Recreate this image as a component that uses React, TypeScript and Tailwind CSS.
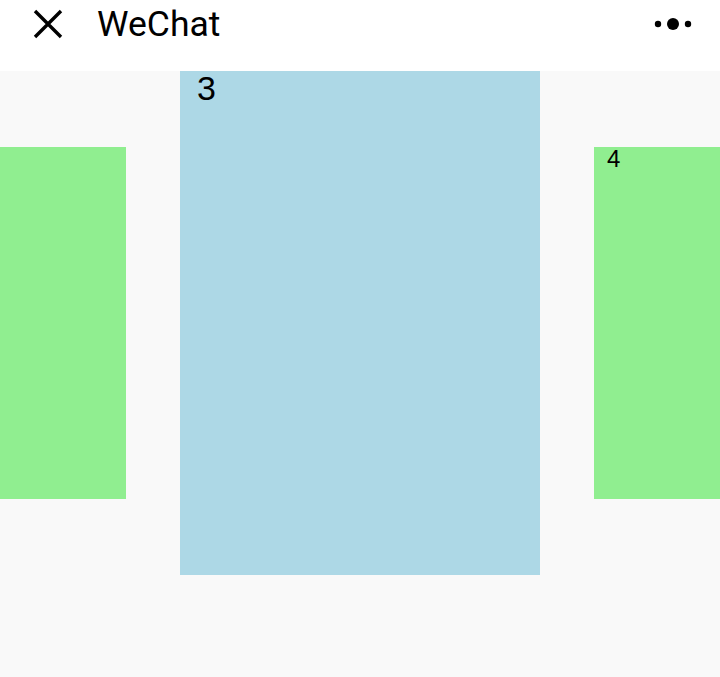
export default function App() {
  return (
    <div className="flex flex-col h-[677px] w-[720px] bg-[#f9f9f9] overflow-hidden" style={{ fontFamily: 'Roboto, "Liberation Sans", sans-serif' }}>
      {/* Top bar */}
      <div className="bg-white pb-[23px]">
        <div className="flex items-center h-12 pl-[33px] pr-[27px]">
          <svg width="30" height="30" viewBox="0 0 30 30" className="shrink-0">
            <path d="M2 2 L28 28 M28 2 L2 28" stroke="#000" strokeWidth="3.4" />
          </svg>
          <span className="ml-[34px] text-[35.5px] text-black mt-[2px]">WeChat</span>
          <svg width="40" height="14" viewBox="0 0 40 14" className="ml-auto">
            <circle cx="5" cy="7" r="3.2" fill="#000" />
            <circle cx="20" cy="7" r="6" fill="#000" />
            <circle cx="35" cy="7" r="3.2" fill="#000" />
          </svg>
        </div>
      </div>

      {/* Swiper */}
      <div className="flex justify-center items-start gap-[54px] overflow-hidden" style={{ fontFamily: '"Liberation Sans", Arial, sans-serif' }}>
        <div className="shrink-0 w-[252px] h-[352px] mt-[76px] bg-[#90ee90]" />
        <div className="shrink-0 w-[360px] h-[504px] bg-[#add8e6] pl-[17px] text-[34px] leading-none text-black">3</div>
        <div className="shrink-0 w-[252px] h-[352px] mt-[76px] bg-[#90ee90] pl-[13px] text-[24px] leading-none text-black">4</div>
      </div>
    </div>
  );
}
